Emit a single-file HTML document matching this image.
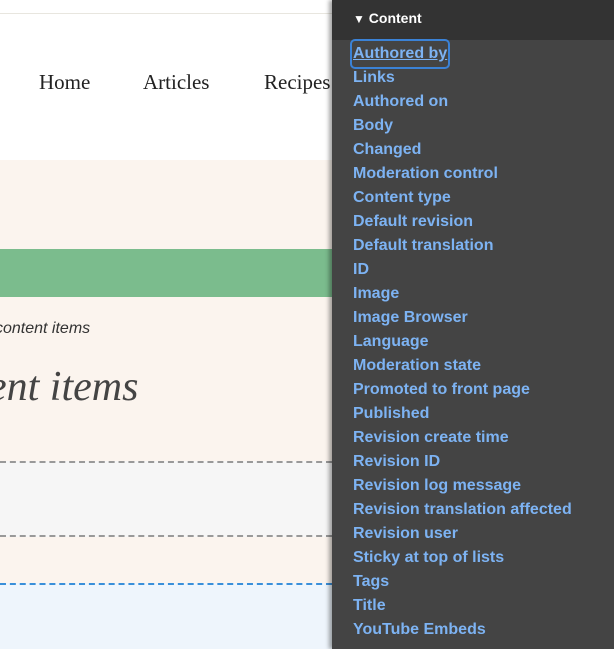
<!DOCTYPE html>
<html><head><meta charset="utf-8"><style>
*{margin:0;padding:0;box-sizing:border-box}
body{width:614px;height:649px;overflow:hidden;position:relative;background:#fff;font-family:"Liberation Sans",sans-serif}
.abs{position:absolute}
.nav{font-family:"Liberation Serif",serif;font-size:21px;color:#222;top:70px}
.side{left:332px;top:0;width:282px;height:649px;background:#444;box-shadow:-3px 0 4px rgba(0,0,0,.35)}
.hd{height:40px;background:#333;color:#fff;font-weight:bold;font-size:14px;padding:10px 0 0 21px}
.list{position:absolute;left:0;top:2px;width:100%}
.list a{display:block;position:absolute;left:21px;color:#7db3f3;font-size:16px;font-weight:bold;text-decoration:none;line-height:24px;white-space:nowrap}
</style></head><body>
<div class="abs" style="left:0;top:13px;width:332px;height:1px;background:#e8e6df"></div>
<div class="abs nav" style="left:39px">Home</div>
<div class="abs nav" style="left:143px">Articles</div>
<div class="abs nav" style="left:264px">Recipes</div>
<div class="abs" style="left:0;top:160px;width:332px;height:423px;background:#fbf4ee"></div>
<div class="abs" style="left:0;top:249px;width:332px;height:48px;background:#7bbc8d"></div>
<div class="abs" style="left:-5px;top:320px;font-style:italic;font-size:16px;color:#333">content items</div>
<div class="abs" style="left:-12px;top:363px;font-family:'Liberation Serif',serif;font-style:italic;font-size:42px;color:#444">ent items</div>
<div class="abs" style="left:0;top:461px;width:332px;height:76px;background:#f6f6f6;border-top:2px dashed #999;border-bottom:2px dashed #999"></div>
<div class="abs" style="left:0;top:583px;width:332px;height:66px;background:#eef5fc;border-top:2px dashed #3a8fd9"></div>
<div class="abs side">
<div class="hd"><span style="font-size:12px">▼</span> Content</div>
<div class="list">
<a style="top:40px;text-decoration:underline;outline:2px solid #3b82d6;outline-offset:1px;border-radius:2px">Authored by</a>
<a style="top:64px">Links</a>
<a style="top:88px">Authored on</a>
<a style="top:112px">Body</a>
<a style="top:136px">Changed</a>
<a style="top:160px">Moderation control</a>
<a style="top:184px">Content type</a>
<a style="top:208px">Default revision</a>
<a style="top:232px">Default translation</a>
<a style="top:256px">ID</a>
<a style="top:280px">Image</a>
<a style="top:304px">Image Browser</a>
<a style="top:328px">Language</a>
<a style="top:352px">Moderation state</a>
<a style="top:376px">Promoted to front page</a>
<a style="top:400px">Published</a>
<a style="top:424px">Revision create time</a>
<a style="top:448px">Revision ID</a>
<a style="top:472px">Revision log message</a>
<a style="top:496px">Revision translation affected</a>
<a style="top:520px">Revision user</a>
<a style="top:544px">Sticky at top of lists</a>
<a style="top:568px">Tags</a>
<a style="top:592px">Title</a>
<a style="top:616px">YouTube Embeds</a>
</div></div>
</body></html>
